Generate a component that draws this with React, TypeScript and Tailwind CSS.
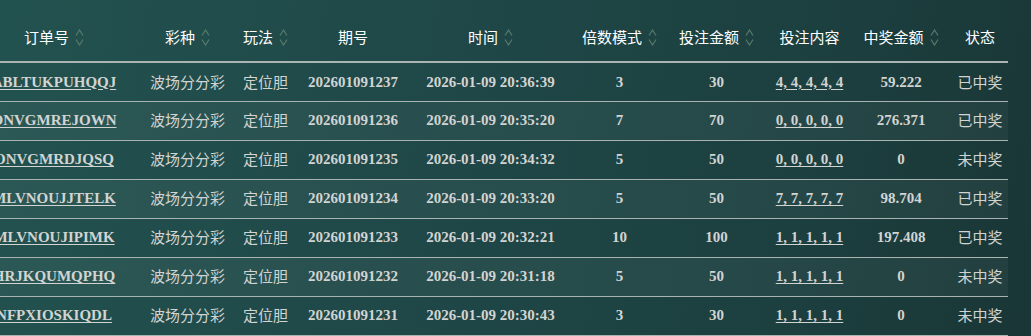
import React from "react";

interface Order {
  id: string;
  issue: string;
  time: string;
  multiple: string;
  amount: string;
  content: string;
  prize: string;
  won: boolean;
}

const orders: Order[] = [
  { id: "ABLTUKPUHQQJ", issue: "202601091237", time: "2026-01-09 20:36:39", multiple: "3", amount: "30", content: "4, 4, 4, 4, 4", prize: "59.222", won: true },
  { id: "ONVGMREJOWN", issue: "202601091236", time: "2026-01-09 20:35:20", multiple: "7", amount: "70", content: "0, 0, 0, 0, 0", prize: "276.371", won: true },
  { id: "ONVGMRDJQSQ", issue: "202601091235", time: "2026-01-09 20:34:32", multiple: "5", amount: "50", content: "0, 0, 0, 0, 0", prize: "0", won: false },
  { id: "MLVNOUJJTELK", issue: "202601091234", time: "2026-01-09 20:33:20", multiple: "5", amount: "50", content: "7, 7, 7, 7, 7", prize: "98.704", won: true },
  { id: "MLVNOUJIPIMK", issue: "202601091233", time: "2026-01-09 20:32:21", multiple: "10", amount: "100", content: "1, 1, 1, 1, 1", prize: "197.408", won: true },
  { id: "HRJKQUMQPHQ", issue: "202601091232", time: "2026-01-09 20:31:18", multiple: "5", amount: "50", content: "1, 1, 1, 1, 1", prize: "0", won: false },
  { id: "NFPXIOSKIQDL", issue: "202601091231", time: "2026-01-09 20:30:43", multiple: "3", amount: "30", content: "1, 1, 1, 1, 1", prize: "0", won: false },
];

const columns: { label: string; width: string; sortable: boolean }[] = [
  { label: "订单号", width: "w-[180px]", sortable: true },
  { label: "彩种", width: "w-[87px]", sortable: true },
  { label: "玩法", width: "w-[69px]", sortable: true },
  { label: "期号", width: "w-[106px]", sortable: false },
  { label: "时间", width: "w-[169px]", sortable: true },
  { label: "倍数模式", width: "w-[89px]", sortable: true },
  { label: "投注金额", width: "w-[105px]", sortable: true },
  { label: "投注内容", width: "w-[81px]", sortable: false },
  { label: "中奖金额", width: "w-[102px]", sortable: true },
  { label: "状态", width: "w-[56px]", sortable: false },
];

const SortIcon = () => (
  <svg width="9" height="17" viewBox="0 0 9 17" fill="none" className="ml-[6px] shrink-0">
    <path d="M1 6.5 4.5 1 8 6.5" stroke="#587a6c" strokeWidth="1.2" />
    <path d="M1 10.5 4.5 16 8 10.5" stroke="#587a6c" strokeWidth="1.2" />
  </svg>
);

const serif = "font-['Liberation_Serif','Noto_Sans_CJK_SC',serif] font-bold";
const cjk = "font-['Noto_Sans_CJK_SC',sans-serif]";

export default function App() {
  return (
    <div className="w-[1031px] h-[336px] overflow-hidden bg-[linear-gradient(100deg,#22524f_0%,#1f4747_45%,#1c3e3e_80%,#1a3636_100%)]">
      <table className="-ml-[36px] w-[1044px] table-fixed border-collapse text-[15px]">
        <colgroup>
          {columns.map((c) => (
            <col key={c.label} className={c.width} />
          ))}
        </colgroup>
        <thead>
          <tr className="h-[62px] border-b-2 border-[#aab4b2]">
            {columns.map((c) => (
              <th key={c.label} className={`p-0 pt-[14px] font-normal text-white ${cjk}`}>
                <span className="inline-flex items-center">
                  {c.label}
                  {c.sortable && <SortIcon />}
                </span>
              </th>
            ))}
          </tr>
        </thead>
        <tbody className="text-[#d2d4d2]">
          {orders.map((o, i) => (
            <tr
              key={o.id}
              className={`h-[39px] border-b border-[#a9b3b1] ${i % 2 === 1 ? "bg-white/[0.045]" : ""}`}
            >
              <td className={`p-0 text-center whitespace-nowrap ${serif}`}>
                <span className="underline underline-offset-2">{o.id}</span>
              </td>
              <td className={`p-0 text-center ${cjk}`}>波场分分彩</td>
              <td className={`p-0 text-center ${cjk}`}>定位胆</td>
              <td className={`p-0 text-center ${serif}`}>{o.issue}</td>
              <td className={`p-0 text-center ${serif}`}>{o.time}</td>
              <td className={`p-0 text-center ${serif}`}>{o.multiple}</td>
              <td className={`p-0 text-center ${serif}`}>{o.amount}</td>
              <td className={`p-0 text-center whitespace-nowrap ${serif}`}>
                <span className="underline underline-offset-2">{o.content}</span>
              </td>
              <td className={`p-0 text-center ${serif}`}>{o.prize}</td>
              <td className={`p-0 text-center ${cjk}`}>{o.won ? "已中奖" : "未中奖"}</td>
            </tr>
          ))}
        </tbody>
      </table>
    </div>
  );
}
